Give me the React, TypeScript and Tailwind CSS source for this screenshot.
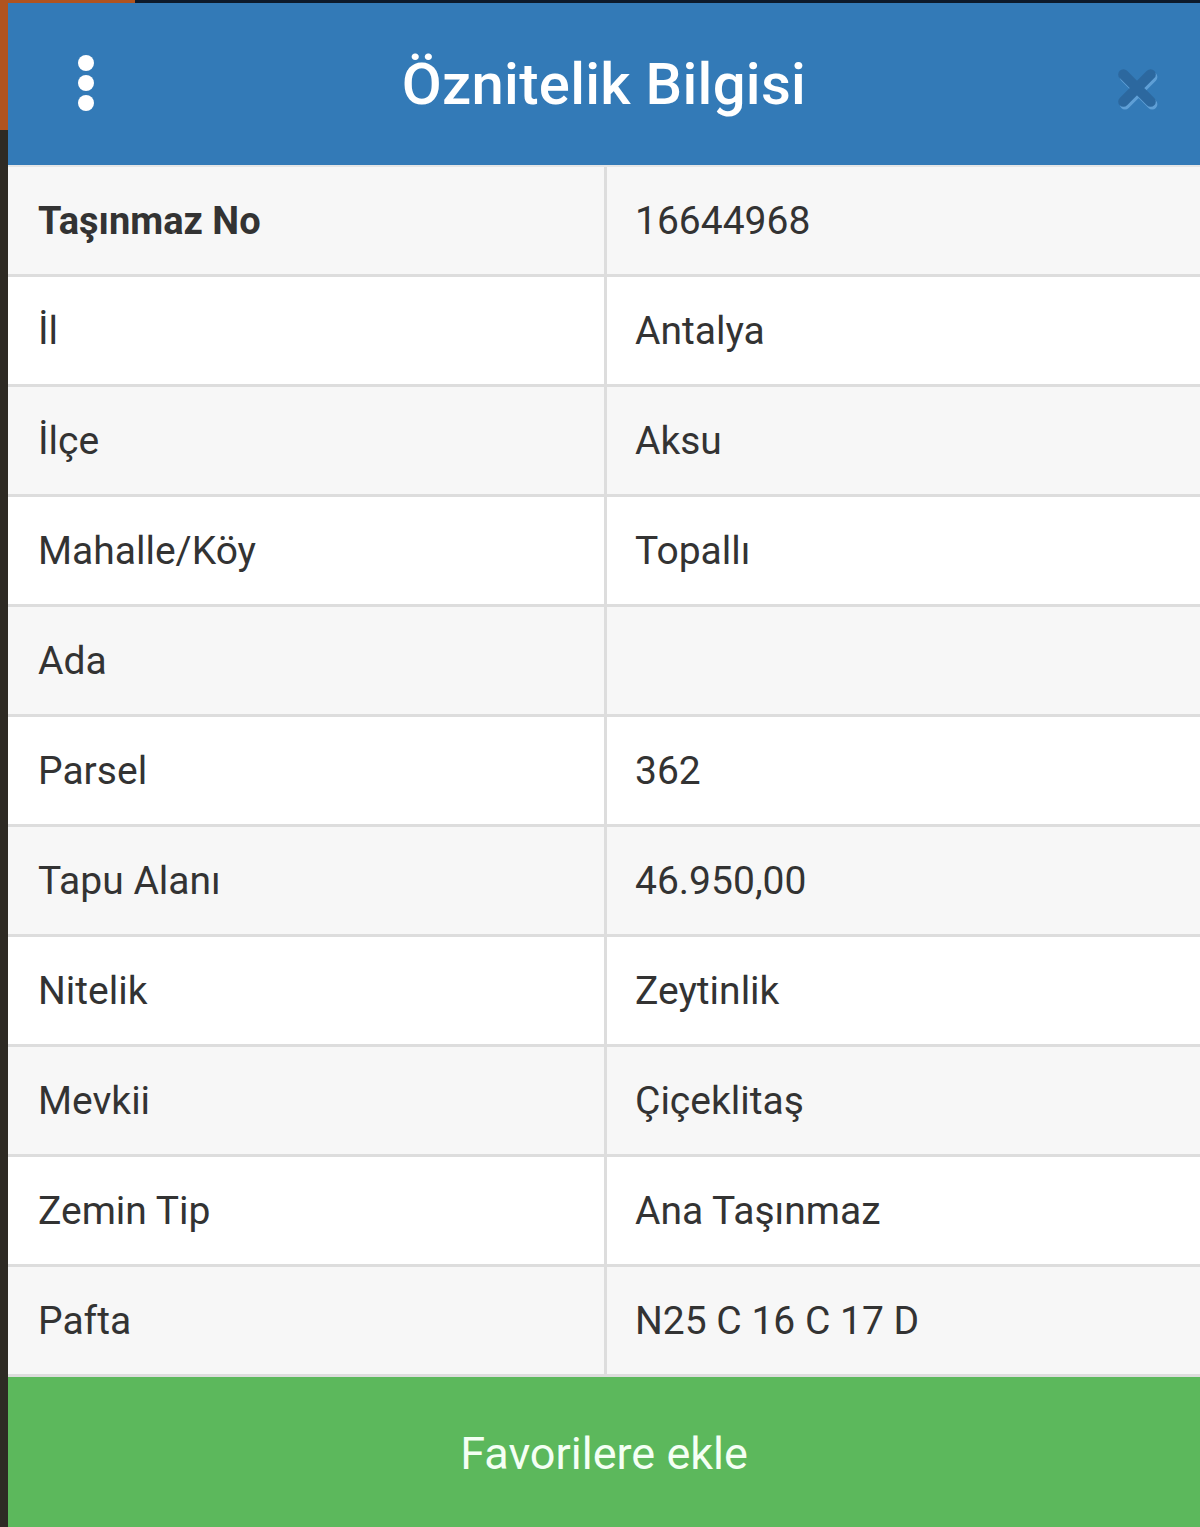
const rows: [string, string][] = [
  ["Taşınmaz No", "16644968"],
  ["İl", "Antalya"],
  ["İlçe", "Aksu"],
  ["Mahalle/Köy", "Topallı"],
  ["Ada", ""],
  ["Parsel", "362"],
  ["Tapu Alanı", "46.950,00"],
  ["Nitelik", "Zeytinlik"],
  ["Mevkii", "Çiçeklitaş"],
  ["Zemin Tip", "Ana Taşınmaz"],
  ["Pafta", "N25 C 16 C 17 D"],
]

export default function App() {
  return (
    <div className="flex h-[1527px] w-[1200px] flex-col overflow-hidden bg-[#23201c] font-['Roboto',sans-serif]">
      {/* map edge peeking out behind the dialog */}
      <div className="flex h-[3px] shrink-0">
        <div className="w-[135px] bg-[#b0531f]" />
        <div className="flex-1 bg-[#0d1a2b]" />
      </div>

      <div className="flex flex-1">
        <div className="flex w-[8px] shrink-0 flex-col">
          <div className="h-[127px] bg-[#b0531f]" />
          <div className="flex-1 bg-[#2e2a24]" />
        </div>

        <div className="flex flex-1 flex-col bg-white">
          {/* Header */}
          <div className="relative flex h-[162px] shrink-0 items-center justify-center bg-[#337ab7]">
            <div className="absolute left-[70px] top-[52px] flex flex-col gap-[4px]">
              <span className="h-[16px] w-[16px] rounded-full bg-white" />
              <span className="h-[16px] w-[16px] rounded-full bg-white" />
              <span className="h-[16px] w-[16px] rounded-full bg-white" />
            </div>
            <h1 className="text-[58px] font-medium tracking-[0.3px] text-white">Öznitelik Bilgisi</h1>
            <button className="absolute right-[40px] top-[62px]">
              <CloseIcon className="h-[46px] w-[46px]" />
            </button>
          </div>

          {/* Table */}
          <div className="border-t-2 border-[#e6e6e6]">
            {rows.map(([label, value], i) => (
              <div
                key={label}
                className={`grid h-[110px] grid-cols-[599px_1fr] border-b-[3px] border-[#dddddd] text-[39px] text-[#333333] ${
                  i % 2 === 0 ? "bg-[#f7f7f7]" : "bg-white"
                }`}
              >
                <div
                  className={`flex items-center border-r-[3px] border-[#dddddd] pl-[30px] pt-[2px] ${
                    i === 0 ? "text-[38px] font-bold" : ""
                  }`}
                >
                  {label}
                </div>
                <div className="flex items-center pl-[28px] pt-[2px]">{value}</div>
              </div>
            ))}
          </div>

          {/* Footer button */}
          <button className="flex flex-1 items-center justify-center bg-[#5cb85c] pt-[4px] text-[45px] text-[#f4fff4]">
            Favorilere ekle
          </button>
        </div>
      </div>
    </div>
  )
}

function CloseIcon({ className }: { className?: string }) {
  return (
    <svg className={className} viewBox="0 0 44 44" fill="none" xmlns="http://www.w3.org/2000/svg">
      <g stroke="#5f9fd6" strokeWidth="10" strokeLinecap="round" transform="translate(1.5 2.5)">
        <path d="M9 9l26 26M35 9L9 35" />
      </g>
      <g stroke="#2c689f" strokeWidth="10" strokeLinecap="round">
        <path d="M9 9l26 26M35 9L9 35" />
      </g>
    </svg>
  )
}
